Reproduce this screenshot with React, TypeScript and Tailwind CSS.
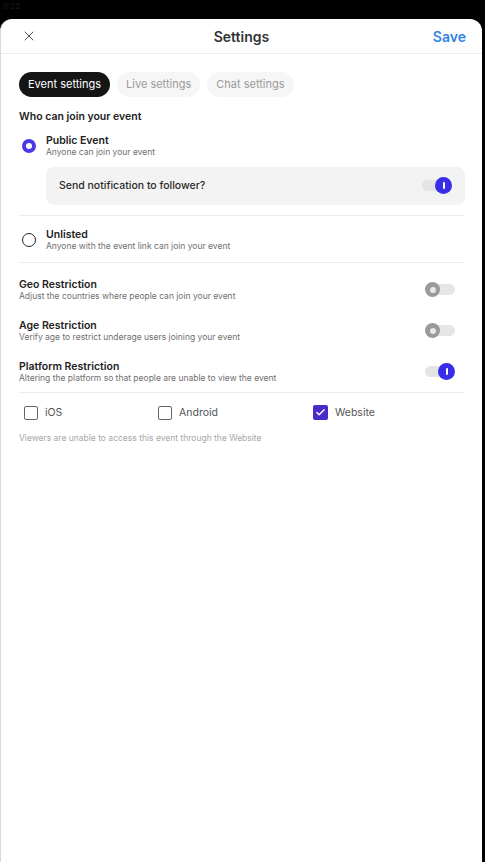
import { X, Check } from 'lucide-react';

const font = { fontFamily: 'Inter, "Noto Sans", sans-serif' };

function Toggle({ on }: { on: boolean }) {
  if (on) {
    return (
      <div className="relative w-[30px] h-[17px] flex items-center">
        <div className="w-[26px] h-[11px] rounded-full bg-[#e4e4e4]" />
        <div className="absolute right-0 top-0 w-[17px] h-[17px] rounded-full bg-[#3a2de8] flex items-center justify-center">
          <div className="w-[2px] h-[7px] rounded-full bg-white" />
        </div>
      </div>
    );
  }
  return (
    <div className="relative w-[30px] h-[15px] flex items-center">
      <div className="ml-[3px] w-[27px] h-[11px] rounded-full bg-[#e6e6e6]" />
      <div className="absolute left-0 top-0 w-[15px] h-[15px] rounded-full bg-[#9a9a9a] flex items-center justify-center">
        <div className="w-[6px] h-[6px] rounded-full bg-[#e8e8e8]" />
      </div>
    </div>
  );
}

function Row({ title, sub, on }: { title: string; sub: string; on: boolean }) {
  return (
    <div className="flex items-center justify-between">
      <div>
        <p className="text-[10.5px] font-semibold text-[#222] leading-[13px]">{title}</p>
        <p className="text-[8.5px] text-[#707070] leading-[11px]">{sub}</p>
      </div>
      <div className="mr-[10px]">
        <Toggle on={on} />
      </div>
    </div>
  );
}

function Box({ label, checked }: { label: string; checked?: boolean }) {
  return (
    <div className="flex items-center gap-[7px]">
      {checked ? (
        <div className="w-[15px] h-[15px] rounded-[2px] bg-[#4b2bc8] flex items-center justify-center">
          <Check size={11} strokeWidth={3} className="text-white" />
        </div>
      ) : (
        <div className="w-[14px] h-[14px] rounded-[2px] border-[1.5px] border-[#666]" />
      )}
      <span className="text-[10.5px] text-[#555]">{label}</span>
    </div>
  );
}

export default function App() {
  return (
    <div className="bg-black min-h-[862px] flex flex-col" style={font}>
      <div className="h-[19px] px-[3px] text-[8px] leading-[12px] text-[#1a1a1a]">9:22</div>
      <div className="flex-1 bg-white rounded-t-[12px] mr-[3px] border-l border-[#d9d9d9]">
        {/* header */}
        <div className="h-[35px] border-b border-[#ececec] flex items-center justify-between pl-[20px] pr-[16px] relative">
          <X size={16} strokeWidth={1.5} className="text-[#555]" />
          <h1 className="absolute left-0 right-0 text-center text-[14px] font-semibold text-[#333] pointer-events-none">
            Settings
          </h1>
          <span className="text-[14px] font-semibold text-[#3385e3]">Save</span>
        </div>

        <div className="pl-[18px] pr-[17px]">
          {/* tabs */}
          <div className="flex gap-[7px] mt-[18px]">
            <div className="h-[25px] px-[9px] rounded-full bg-[#151515] text-white text-[11px] flex items-center">Event settings</div>
            <div className="h-[25px] px-[9px] rounded-full bg-[#f6f6f6] text-[#9a9a9a] text-[11px] flex items-center">Live settings</div>
            <div className="h-[25px] px-[9px] rounded-full bg-[#f6f6f6] text-[#9a9a9a] text-[11px] flex items-center">Chat settings</div>
          </div>

          <p className="mt-[12px] text-[10.5px] font-semibold text-[#222]">Who can join your event</p>

          {/* public */}
          <div className="flex items-center gap-[10px] mt-[9px] pl-[3px]">
            <div className="w-[14px] h-[14px] rounded-full border-[4px] border-[#4a39e6]" />
            <div>
              <p className="text-[10.5px] font-semibold text-[#222] leading-[13px]">Public Event</p>
              <p className="text-[8.5px] text-[#707070] leading-[11px]">Anyone can join your event</p>
            </div>
          </div>

          <div className="ml-[27px] mt-[9px] h-[38px] rounded-[8px] bg-[#f3f3f3] flex items-center justify-between pl-[13px] pr-[13px]">
            <span className="text-[10.5px] font-medium text-[#2a2a2a]">Send notification to follower?</span>
            <Toggle on />
          </div>

          <div className="border-t border-[#ececec] mt-[10px]" />

          {/* unlisted */}
          <div className="flex items-center gap-[10px] mt-[12px] pl-[3px]">
            <div className="w-[14px] h-[14px] rounded-full border-[1.5px] border-[#222]" />
            <div>
              <p className="text-[10.5px] font-semibold text-[#222] leading-[13px]">Unlisted</p>
              <p className="text-[8.5px] text-[#707070] leading-[11px]">Anyone with the event link can join your event</p>
            </div>
          </div>

          <div className="border-t border-[#ececec] mt-[10px]" />

          <div className="flex flex-col gap-[17px] mt-[15px]">
            <Row title="Geo Restriction" sub="Adjust the countries where people can join your event" on={false} />
            <Row title="Age Restriction" sub="Verify age to restrict underage users joining your event" on={false} />
            <Row title="Platform Restriction" sub="Altering the platform so that people are unable to view the event" on />
          </div>

          <div className="border-t border-[#ececec] mt-[8px]" />

          <div className="grid grid-cols-[134px_155px_1fr] mt-[12px] pl-[5px]">
            <Box label="iOS" />
            <Box label="Android" />
            <Box label="Website" checked />
          </div>

          <p className="mt-[11px] text-[8.5px] text-[#a8a8a8]">Viewers are unable to access this event through the Website</p>
        </div>
      </div>
    </div>
  );
}
